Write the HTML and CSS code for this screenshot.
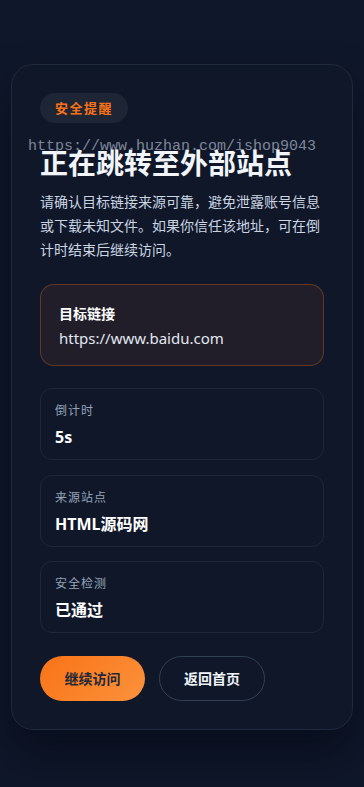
FILE: index.html
```html
<!DOCTYPE html>
<html lang="zh-CN">

<head>
    <meta charset="UTF-8">
    <meta name="viewport" content="width=device-width, initial-scale=1.0">
    <title>安全提醒</title>
    <link rel="stylesheet" href="styles.css">
</head>

<body>
    <div class="page">
        <div class="card">
            <span class="badge">安全提醒</span>
            <h1 class="title">正在跳转至外部站点</h1>
            <p class="desc">请确认目标链接来源可靠，避免泄露账号信息或下载未知文件。如果你信任该地址，可在倒计时结束后继续访问。</p>

            <div class="target">
                <div class="target-label">目标链接</div>
                <div class="target-url">https://www.baidu.com</div>
            </div>

            <div class="info-list">
                <div class="info">
                    <div class="info-label">倒计时</div>
                    <div class="info-value">5s</div>
                </div>
                <div class="info">
                    <div class="info-label">来源站点</div>
                    <div class="info-value">HTML源码网</div>
                </div>
                <div class="info">
                    <div class="info-label">安全检测</div>
                    <div class="info-value">已通过</div>
                </div>
            </div>

            <div class="actions">
                <a class="btn btn-primary" href="#">继续访问</a>
                <a class="btn btn-ghost" href="#">返回首页</a>
            </div>
        </div>
    </div>

    <div class="watermark">https://www.huzhan.com/ishop9043</div>
</body>

</html>
```
FILE: styles.css
```css
/* 页面 */
body {
    margin: 0;
    background: #0f172a;
    font-family: "Noto Sans", "Noto Sans CJK SC", sans-serif;
    color: #f1f5f9;
}

.page {
    padding: 64px 11px 57px;
}

/* 卡片 */
.card {
    background: #0f1729;
    border: 1px solid #1f2a3c;
    border-radius: 22px;
    padding: 28px;
    box-shadow: 0 24px 40px rgba(3, 7, 18, 0.55);
}

.badge {
    display: inline-block;
    height: 30px;
    line-height: 30px;
    padding: 0 15px;
    border-radius: 15px;
    background: #1e2535;
    color: #f97316;
    font-size: 13px;
    font-weight: 700;
    letter-spacing: 1.5px;
}

.title {
    margin: 20px 0 0;
    font-size: 28px;
    line-height: 40px;
    font-weight: 700;
    color: #f1f5f9;
}

.desc {
    margin: 7px 0 0;
    font-size: 14px;
    line-height: 24px;
    color: #cbd5e1;
}

/* 目标链接 */
.target {
    margin-top: 22px;
    padding: 18px 18px 16px;
    border: 1px solid rgba(249, 115, 22, 0.3);
    border-radius: 14px;
    background: #211e2a;
}

.target-label {
    font-size: 14px;
    line-height: 22px;
    font-weight: 700;
    color: #ffffff;
}

.target-url {
    margin-top: 2px;
    font-size: 15px;
    line-height: 22px;
    color: #e2e8f0;
}

/* 信息列表 */
.info-list {
    display: flex;
    flex-direction: column;
    gap: 14.5px;
    margin-top: 22px;
}

.info {
    padding: 12px 14px 10px;
    border: 1px solid #1e283a;
    border-radius: 12px;
}

.info-label {
    font-size: 12px;
    line-height: 20px;
    color: #94a3b8;
    letter-spacing: 1px;
}

.info-value {
    margin-top: 4px;
    font-size: 16px;
    line-height: 24px;
    font-weight: 700;
    color: #ffffff;
}

/* 按钮 */
.actions {
    display: flex;
    gap: 14px;
    margin-top: 23px;
}

.btn {
    display: inline-block;
    height: 45px;
    line-height: 45px;
    padding: 0 24px;
    border-radius: 23px;
    font-size: 14px;
    font-weight: 700;
    text-decoration: none;
    box-sizing: border-box;
    text-align: center;
}

.btn-primary {
    width: 105px;
    background: linear-gradient(135deg, #f97316, #fb923c);
    color: #1f2937;
}

.btn-ghost {
    width: 106px;
    border: 1px solid #334155;
    line-height: 43px;
    color: #f1f5f9;
}

/* 水印 */
.watermark {
    position: absolute;
    top: 138px;
    left: 28px;
    font-family: "Liberation Mono", monospace;
    font-size: 15px;
    color: rgba(203, 213, 225, 0.6);
    pointer-events: none;
}
```
